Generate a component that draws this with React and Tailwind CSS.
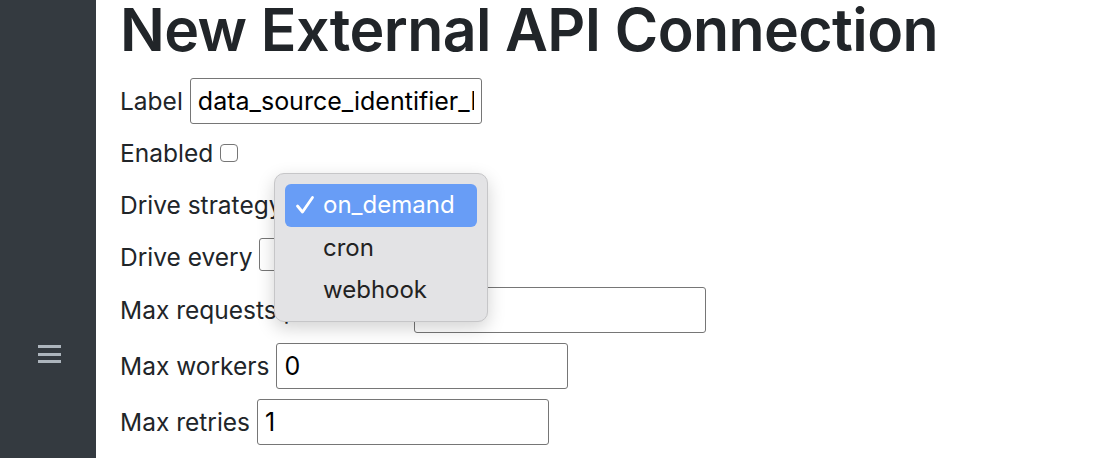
import React from 'react';

const inputCls =
  'h-[46px] w-[292px] rounded-[3px] border border-[#767676] bg-white px-[7px] text-[25px] text-black outline-none';

function Row({ label, children, className = 'h-[46px]' }) {
  return (
    <div className={`flex items-center gap-[7px] ${className}`}>
      <span className="whitespace-nowrap">{label}</span>
      {children}
    </div>
  );
}

function StrategyMenu() {
  const options = ['on_demand', 'cron', 'webhook'];
  return (
    <div className="absolute left-[274px] top-[173px] w-[214px] rounded-[10px] border border-[#c6c6c8] bg-[#e3e3e5] px-[10px] pb-[9px] pt-[10px] shadow-[0_6px_18px_rgba(0,0,0,0.18)]">
      {options.map((o, i) => (
        <div
          key={o}
          className={`flex h-[42.5px] items-center rounded-[6px] text-[24px] ${
            i === 0 ? 'bg-[#689df6] text-white' : 'text-[#222]'
          }`}
        >
          <span className="flex w-[38px] justify-center pl-[1px]">
            {i === 0 && (
              <svg width="20" height="20" viewBox="0 0 20 20" fill="none">
                <path d="M2.5 11 L7.5 17 L17.5 2.5" stroke="white" strokeWidth="2.8" strokeLinecap="round" strokeLinejoin="round" />
              </svg>
            )}
          </span>
          <span>{o}</span>
        </div>
      ))}
    </div>
  );
}

export default function App() {
  return (
    <div
      className="relative flex h-[458px] w-[1102px] overflow-hidden bg-white text-[#212529]"
      style={{ fontFamily: 'Inter, "Liberation Sans", sans-serif' }}
    >
      {/* Sidebar */}
      <aside className="flex w-[96px] shrink-0 flex-col bg-[#343a40] pl-[38px] pt-[345px]">
        <div className="flex w-[23px] flex-col gap-[4.5px]">
          <span className="h-[3px] bg-[#adb5bd]" />
          <span className="h-[3px] bg-[#adb5bd]" />
          <span className="h-[3px] bg-[#adb5bd]" />
        </div>
      </aside>

      {/* Main form */}
      <main className="flex-1 pl-[24px] text-[24.5px]">
        <h1 className="text-[59px] font-semibold leading-none tracking-[-0.6px]">New External API Connection</h1>

        <div className="mt-[19px] flex flex-col gap-[10px]">
          <Row label="Label">
            <input className={inputCls} defaultValue="data_source_identifier_hook" />
          </Row>
          <Row label="Enabled" className="h-[38px]">
            <input type="checkbox" className="h-[18px] w-[18px] appearance-none rounded-[4px] border border-[#767676] bg-white" />
          </Row>
          <Row label="Drive strategy">
            <div className="h-[33px] w-[150px]" />
          </Row>
          <Row label="Drive every" className="h-[39px]">
            <div className="h-[33px] w-[150px] self-start rounded-[3px] border border-[#767676] bg-white" />
          </Row>
          <Row label="Max requests per minute">
            <input className={inputCls} defaultValue="0" />
          </Row>
          <Row label="Max workers">
            <input className={inputCls} defaultValue="0" />
          </Row>
          <Row label="Max retries">
            <input className={inputCls} defaultValue="1" />
          </Row>
        </div>
      </main>

      <StrategyMenu />
    </div>
  );
}
